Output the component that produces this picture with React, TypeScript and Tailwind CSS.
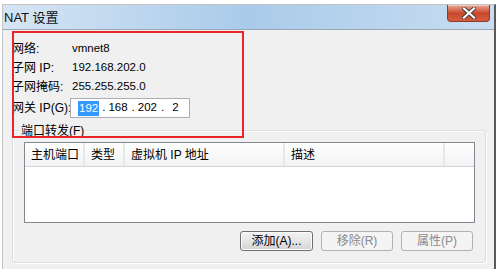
import React from "react";

const cjk = "font-['Liberation_Sans','Noto_Sans_CJK_SC',sans-serif]";

function CloseButton() {
  return (
    <div className="mr-[4px] flex h-[17px] w-[43px] items-center justify-center rounded-b-[4px] border border-t-0 border-[#8d3b2b] bg-linear-to-b from-[#e9a994] via-[#c9472c] to-[#d65c3f] shadow-[inset_0_1px_0_rgba(255,255,255,0.4)]">
      <svg width="14" height="12" viewBox="0 0 14 12">
        <path
          d="M2 1.5 L12 10.5 M12 1.5 L2 10.5"
          stroke="#3b3b3b"
          strokeWidth="4"
          strokeLinecap="square"
        />
        <path
          d="M2 1.5 L12 10.5 M12 1.5 L2 10.5"
          stroke="#ffffff"
          strokeWidth="2.2"
          strokeLinecap="square"
        />
      </svg>
    </div>
  );
}

function Row({ label, value }: { label: string; value: string }) {
  return (
    <div className="flex h-[19px] items-center">
      <span className="w-[60px] shrink-0 whitespace-nowrap text-[12px]">{label}</span>
      <span className="text-[11.5px]">{value}</span>
    </div>
  );
}

function Btn({ label, disabled }: { label: string; disabled?: boolean }) {
  return (
    <div
      className={
        disabled
          ? "flex h-[20px] w-[72px] items-center justify-center rounded-[3px] border border-[#adb2b5] bg-[#f4f4f4] text-[12px] text-[#8a8a8a]"
          : "flex h-[20px] w-[73px] items-center justify-center rounded-[3px] border border-[#707070] bg-linear-to-b from-[#f2f2f2] via-[#e6e6e6] to-[#d3d3d3] text-[12px] text-black shadow-[inset_0_0_0_1px_#fcfcfc]"
      }
    >
      {label}
    </div>
  );
}

export default function App() {
  const cols = [
    { t: "主机端口", w: "w-[60px]" },
    { t: "类型", w: "w-[40px]" },
    { t: "虚拟机 IP 地址", w: "w-[160px]" },
    { t: "描述", w: "w-[160px]" },
  ];

  return (
    <div className={`relative h-[269px] w-[496px] overflow-hidden bg-white pl-[2px] pt-[4px] text-black ${cjk}`}>
      <div className="flex h-[265px] flex-col border-l border-t border-[#c4c4c4] border-r-2 border-r-[#5a5a5a]">
        {/* Title bar */}
        <div className="flex h-[25px] shrink-0 items-start justify-between border-b border-[#9aa7b4] bg-linear-to-r from-[#d6e5f4] via-[#a9cbea] to-[#c8ddf1]">
          <span className="mt-[5px] pl-[1px] text-[13px] leading-[16px] text-[#111]">NAT 设置</span>
          <CloseButton />
        </div>

        {/* Body */}
        <div className="flex flex-1 flex-col bg-[#f0f0f0] pl-[9px] pr-[9px] pt-[9px]">
          <Row label="网络:" value="vmnet8" />
          <Row label="子网 IP:" value="192.168.202.0" />
          <Row label="子网掩码:" value="255.255.255.0" />
          <div className="mt-[2px] flex h-[20px] items-center">
            <span className="w-[58px] shrink-0 whitespace-nowrap text-[12px]">网关 IP(G):</span>
            <div className="flex h-[20px] w-[120px] items-center border border-[#abadb3] bg-white pl-[7px] text-[11.5px]">
              <span className="bg-[#3399ff] px-[1px] leading-[15px] text-white">192</span>
              <span className="ml-[3px]">.</span>
              <span className="ml-[3px]">168</span>
              <span className="ml-[4px]">.</span>
              <span className="ml-[3px]">202</span>
              <span className="ml-[4px]">.</span>
              <span className="ml-[8px]">2</span>
            </div>
          </div>

          {/* Group box */}
          <div className="relative mt-[12px] mr-[-1px] flex h-[133px] flex-col rounded-[3px] border border-[#d5dfe5] shadow-[inset_1px_1px_0_#ffffff,1px_1px_0_#ffffff] pl-[11px] pr-[10px] pt-[11px]">
            <span className="absolute left-[7px] top-[-7px] bg-[#f0f0f0] px-[1px] text-[12px] leading-[14px]">端口转发(F)</span>

            {/* List view */}
            <div className="flex h-[81px] w-[451px] flex-col border border-[#828790] bg-white">
              <div className="flex h-[24px] items-stretch border-b border-[#d5d5d5] bg-linear-to-b from-[#ffffff] to-[#f1f2f4]">
                {cols.map((c) => (
                  <div
                    key={c.t}
                    className={`${c.w} flex items-center whitespace-nowrap border-r-2 border-[#e6e8eb] pl-[6px] text-[12px]`}
                  >
                    {c.t}
                  </div>
                ))}
                <div className="flex-1" />
              </div>
            </div>

            <div className="mt-[8px] flex justify-end gap-[8px] pr-[2px]">
              <Btn label="添加(A)..." />
              <Btn label="移除(R)" disabled />
              <Btn label="属性(P)" disabled />
            </div>
          </div>
        </div>
      </div>

      {/* Annotation */}
      <div className="pointer-events-none absolute left-[12px] top-[31px] h-[107px] w-[232px] border-2 border-[#e8262a]" />
    </div>
  );
}
